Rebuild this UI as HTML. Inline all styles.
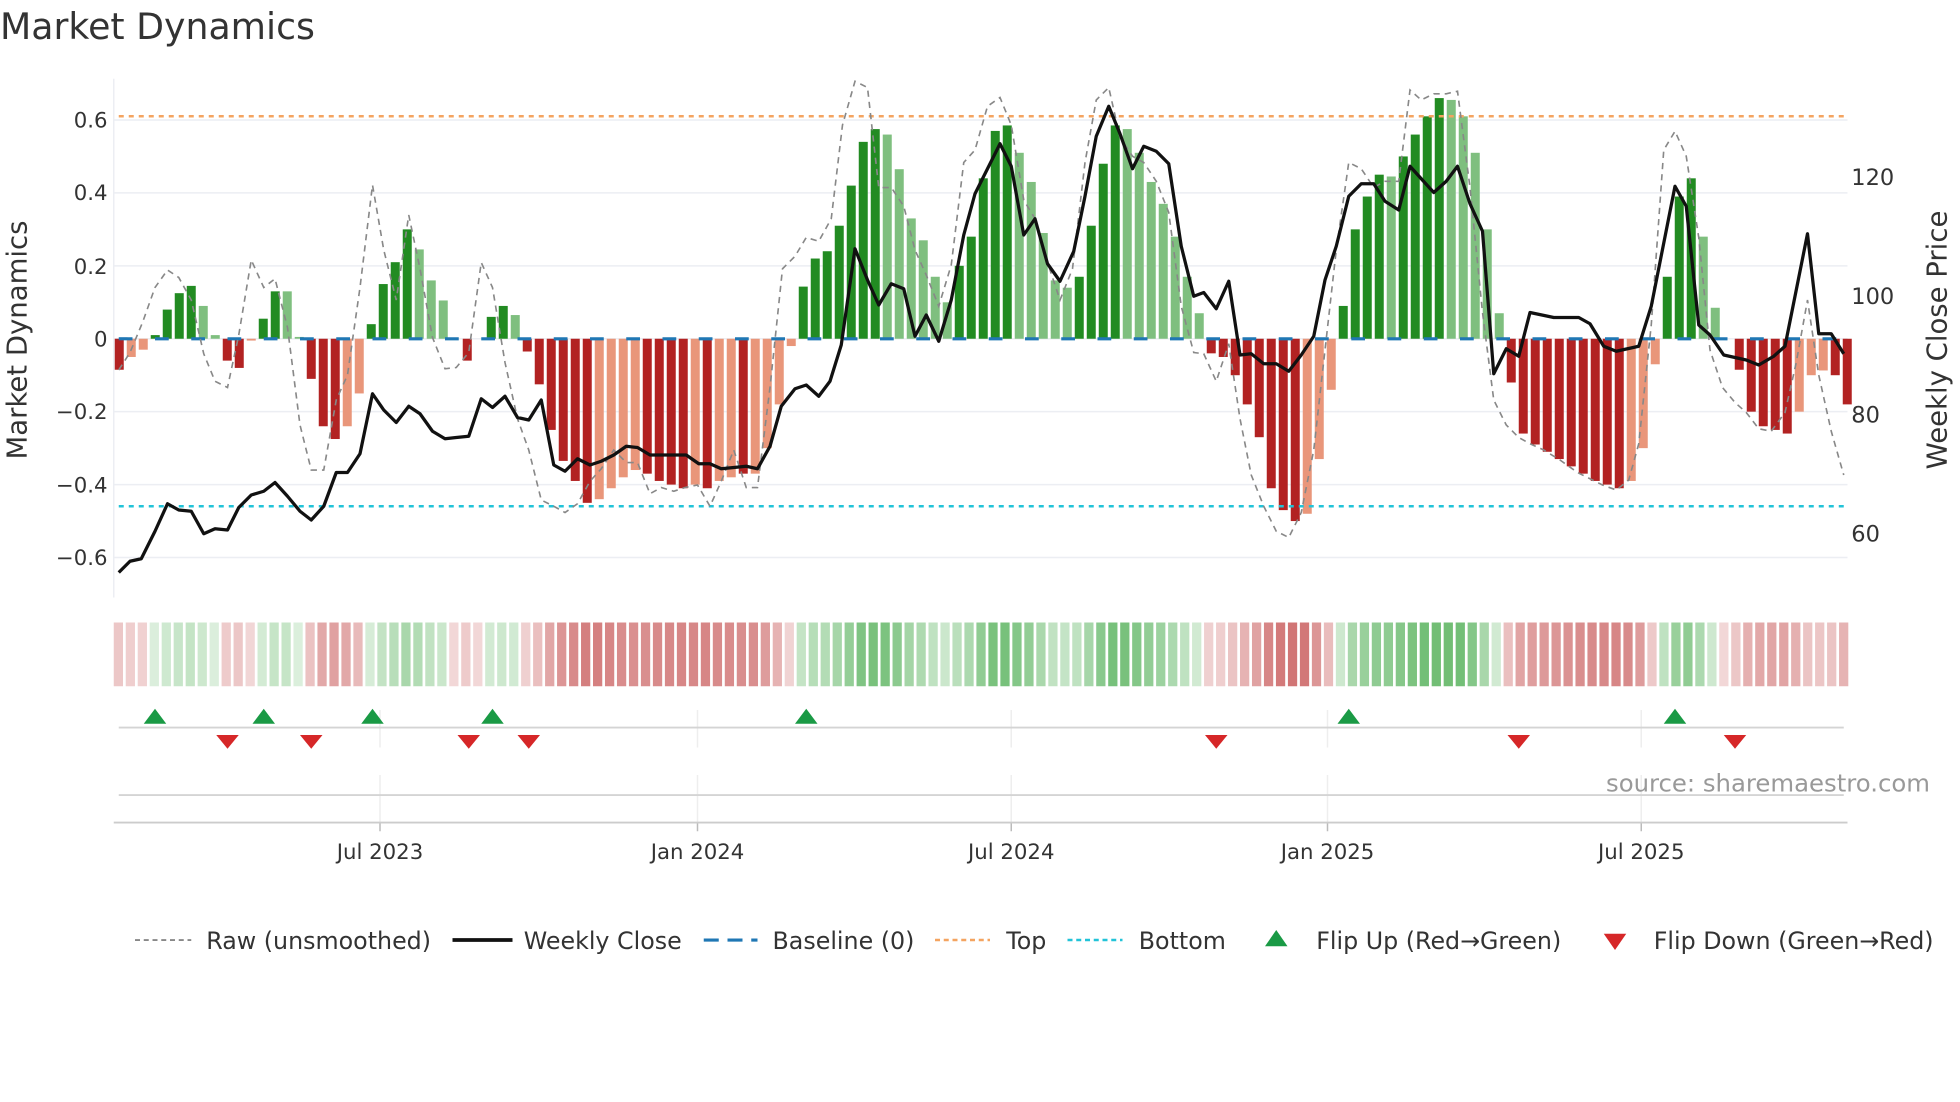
<!DOCTYPE html>
<html><head><meta charset="utf-8"><style>
html,body{margin:0;padding:0;background:#fff;}
svg{display:block;}
text{font-family:"DejaVu Sans","Liberation Sans",sans-serif;fill:#333;}
</style></head><body>
<svg id="c" width="1960" height="1102" viewBox="0 0 1568 881.6" xmlns="http://www.w3.org/2000/svg">
<rect width="1568" height="882" fill="#fff"/>
<text x="0" y="31" font-size="29">Market Dynamics</text>
<g id="grid"></g>
<g id="heat"></g>
<g id="bars"></g>
<g id="lines"></g>
<g font-size="17" text-anchor="end">
<text x="86" y="102">0.6</text><text x="86" y="160">0.4</text><text x="86" y="219">0.2</text>
<text x="86" y="277">0</text><text x="86" y="335">−0.2</text><text x="86" y="394">−0.4</text><text x="86" y="452">−0.6</text>
</g>
<g font-size="18">
<text x="1481" y="148">120</text><text x="1481" y="243">100</text><text x="1481" y="338">80</text><text x="1481" y="433">60</text>
</g>
<text transform="translate(21,272) rotate(-90)" font-size="22" text-anchor="middle">Market Dynamics</text>
<text transform="translate(1557,272) rotate(-90)" font-size="22" text-anchor="middle">Weekly Close Price</text>
<g font-size="17" text-anchor="middle">
<text x="304" y="687">Jul 2023</text><text x="558" y="687">Jan 2024</text><text x="809" y="687">Jul 2024</text>
<text x="1062" y="687">Jan 2025</text><text x="1313" y="687">Jul 2025</text>
</g>
<text x="1544" y="633" font-size="19.5" text-anchor="end" style="fill:#999">source: sharemaestro.com</text>
<g font-size="19">
<line x1="108" y1="752" x2="153" y2="752" stroke="#888" stroke-width="1.5" stroke-dasharray="4,3"/>
<text x="165" y="759">Raw (unsmoothed)</text>
<line x1="362" y1="752" x2="410" y2="752" stroke="#111" stroke-width="3"/>
<text x="419" y="759">Weekly Close</text>
<line x1="563" y1="752" x2="606" y2="752" stroke="#1f77b4" stroke-width="2.5" stroke-dasharray="12,7"/>
<text x="618" y="759">Baseline (0)</text>
<line x1="748" y1="752" x2="792" y2="752" stroke="#f4a460" stroke-width="2" stroke-dasharray="4,3"/>
<text x="805" y="759">Top</text>
<line x1="854" y1="752" x2="898" y2="752" stroke="#22c3d8" stroke-width="2" stroke-dasharray="4,3"/>
<text x="911" y="759">Bottom</text>
<polygon points="1012,757 1030,757 1021,744" fill="#1a9a45"/>
<text x="1053" y="759">Flip Up (Red→Green)</text>
<polygon points="1283,747 1301,747 1292,760" fill="#d62728"/>
<text x="1323" y="759">Flip Down (Green→Red)</text>
</g>
</svg>
<script>
var NS="http://www.w3.org/2000/svg";
function el(p,t,a){var e=document.createElementNS(NS,t);for(var k in a)e.setAttribute(k,a[k]);document.getElementById(p).appendChild(e);return e;}
[0.6,0.4,0.2,0,-0.2,-0.4,-0.6].forEach(function(v){var y=271-v*291.7;el("grid","line",{x1:91,x2:1478,y1:y,y2:y,stroke:"#eceef3","stroke-width":1.2});});
el("grid","line",{x1:91,x2:91,y1:63,y2:478,stroke:"#eceef3","stroke-width":1.2});
[304,558,809,1062,1313].forEach(function(x){
 el("grid","line",{x1:x,x2:x,y1:568,y2:598,stroke:"#eee","stroke-width":1.2});
 el("grid","line",{x1:x,x2:x,y1:620,y2:658,stroke:"#eee","stroke-width":1.2});
 el("grid","line",{x1:x,x2:x,y1:658,y2:665,stroke:"#bbb","stroke-width":1.2});
});
el("grid","line",{x1:95,x2:1475,y1:582,y2:582,stroke:"#d4d4d4","stroke-width":1.5});
el("grid","line",{x1:95,x2:1475,y1:636,y2:636,stroke:"#d4d4d4","stroke-width":1.5});
el("grid","line",{x1:91,x2:1478,y1:658,y2:658,stroke:"#ccc","stroke-width":1.5});
var d="-.085R -.05S -.03S .01G .08G .125G .145G .09L .01L -.06R -.08R -.005S .055G .13G .13L .005L -.11R -.24R -.275R -.24S -.15S .04G .15G .21G .30G .245L .16L .105L 0L -.06R 0L .06G .09G .065L -.035R -.125R -.25R -.335R -.39R -.45R -.44S -.41S -.38S -.36S -.37R -.39R -.40R -.41R -.40S -.41R -.39S -.38S -.37R -.37S -.30S -.18S -.02S "+
".143G .22G .24G .31G .42G .54G .575G .56L .465L .33L .27L .17L .10L .20G .28G .44G .57G .585G .51L .43L .29L .16L .14L .17G "+
".31G .48G .585G .575L .51L .43L .37L .28L .17L .07L -.04R -.05R -.10R -.18R -.27R -.41R -.47R -.50R -.48S -.33S -.14S .09G .30G .39G .45G .445L .50G .56G .61G .66G .655L .61L .51L .30L .07L "+
"-.12R -.26R -.29R -.31R -.33R -.35R -.37R -.39R -.40R -.41R -.39S -.30S -.07S .17G .39G .44G .28L .085L 0L -.085R -.20R -.24R -.25R -.26R -.20S -.10S -.087S -.10R -.18R";
var arr=d.split(" ");
var col={G:"#228b22",L:"#7fbf7f",R:"#b22222",S:"#e9967a"};
arr.forEach(function(s,i){
 var t=s.slice(-1),v=parseFloat(s.slice(0,-1));var x=95.4+i*9.6;
 var h=Math.abs(v)*291.7;
 if(h>0.3) el("bars","rect",{x:x-3.6,width:7.2,y:v>0?271-h:271,height:h,fill:col[t]});
 var a=Math.min(0.9,0.22+Math.abs(v)*1.1);
 var c=v>=0.005?"rgba(70,170,75,"+(a*0.85)+")":"rgba(195,75,75,"+a+")";
 if(Math.abs(v)<0.005)c="rgba(195,75,75,0.22)";
 el("heat","rect",{x:91+i*9.585,width:7.4,y:498,height:51,fill:c});
});
el("lines","line",{x1:95,x2:1475,y1:271,y2:271,stroke:"#1f77b4","stroke-width":2.5,"stroke-dasharray":"11,18"});
el("lines","line",{x1:95,x2:1475,y1:93,y2:93,stroke:"#f4a460","stroke-width":2,"stroke-dasharray":"4,4"});
el("lines","line",{x1:95,x2:1475,y1:405,y2:405,stroke:"#22c3d8","stroke-width":2,"stroke-dasharray":"4,4"});
var raw="95,296 104,282 114,258 124,230 134,216 143,222 153,240 163,283 172,305 182,310 191,268 201,208 211,230 220,223 230,262 240,340 249,376 259,376 269,320 278,300 288,230 298,148 307,200 317,240 327,172 336,215 346,270 356,295 365,294 375,282 385,210 394,230 404,290 414,335 423,360 433,400 443,405 452,410 462,403 472,385 481,375 491,360 501,370 510,370 520,395 529,390 539,393 548,390 558,388 568,405 577,385 587,360 597,390 606,390 616,310 626,215 636,205 645,190 655,193 665,175 674,100 684,65 694,70 703,150 713,150 723,165 732,200 741,220 751,245 761,212 771,130 780,120 790,85 800,78 809,100 819,160 828,175 838,210 848,240 858,215 868,130 877,80 887,70 896,110 906,125 915,130 925,145 935,170 945,245 955,282 963,283 973,305 983,275 992,335 1001,380 1011,405 1021,425 1031,430 1041,410 1051,360 1060,280 1069,200 1079,130 1089,135 1099,150 1108,145 1119,145 1128,72 1137,80 1147,75 1157,75 1166,73 1176,150 1186,250 1195,320 1205,340 1215,350 1224,355 1235,360 1248,368 1262,378 1272,383 1282,388 1293,392 1303,384 1311,355 1321,260 1331,120 1340,105 1349,125 1359,190 1368,280 1378,310 1388,322 1397,330 1407,343 1417,345 1428,330 1437,290 1446,240 1455,300 1465,345 1475,380";
el("lines","polyline",{points:raw,fill:"none",stroke:"#888","stroke-width":1.3,"stroke-dasharray":"5,4"});
var close="95,458 104,449 113,447 124,425 134,403 143,408 153,409 163,427 172,423 182,424 191,406 201,396 211,393 220,386 230,397 240,409 249,416 259,405 269,378 278,378 288,363 298,315 307,328 317,338 327,325 336,331 346,345 356,351 365,350 375,349 385,319 394,326 404,317 414,334 423,336 433,320 443,372 452,377 462,367 472,372 481,369 491,364 501,357 510,358 520,364 549,364 559,371 568,371 577,375 597,373 606,375 616,357 625,325 636,311 645,308 655,317 664,305 673,276 684,199 694,224 703,244 713,227 723,231 732,269 741,252 751,273 761,240 771,188 780,155 800,115 809,133 819,188 828,175 838,211 848,225 859,201 868,157 877,109 887,85 896,107 906,135 915,117 925,121 935,131 945,197 955,237 963,234 973,247 983,225 992,284 1001,283 1011,291 1021,291 1031,297 1041,284 1051,269 1060,224 1069,197 1079,157 1089,147 1099,147 1108,161 1119,168 1128,133 1137,143 1147,154 1157,145 1166,133 1176,163 1186,185 1195,299 1205,279 1215,285 1224,250 1243,254 1263,254 1272,259 1283,277 1293,281 1311,277 1321,245 1340,149 1349,165 1359,260 1368,268 1379,284 1397,288 1407,292 1419,285 1428,277 1446,187 1455,267 1465,267 1475,283";
el("lines","polyline",{points:close,fill:"none",stroke:"#111","stroke-width":2.6,"stroke-linejoin":"round"});
[124,211,298,394,645,1079,1340].forEach(function(x){el("lines","polygon",{points:(x-9)+",579 "+(x+9)+",579 "+x+",567",fill:"#1a9a45"});});
[182,249,375,423,973,1215,1388].forEach(function(x){el("lines","polygon",{points:(x-9)+",588 "+(x+9)+",588 "+x+",599",fill:"#d62728"});});
</script>
</body></html>
